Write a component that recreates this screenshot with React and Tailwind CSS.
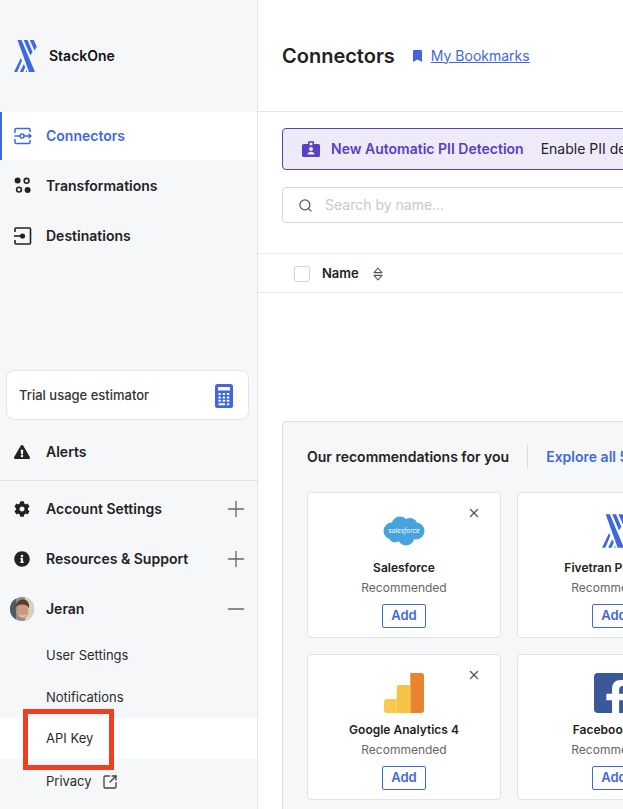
import React from 'react';
import { Search, Plus, Minus, X, SquareArrowOutUpRight } from 'lucide-react';
import { FaExclamationTriangle, FaCog, FaInfoCircle, FaBookmark, FaFacebookF } from 'react-icons/fa';

const BLUE = '#3f68e0';

function Logo({ className }) {
  return (
    <svg viewBox="0 0 23 32" className={className} fill="#3f68e0">
      <polygon points="3.500,0 7.500,0 21,32 15,32" />
      <polygon points="9.800,0 13.500,0 18.500,12 16.300,15.500" />
      <polygon points="15.800,0 19.800,0 22.800,7 20.500,10.500" />
      <polygon points="0,32 3.200,32 8,20.500 6.800,18" />
      <polygon points="5.800,32 9.200,32 11.200,27 9.900,24" />
      <polygon points="11.600,32 13.200,32 12.500,30" />
    </svg>
  );
}

function ConnectorIcon() {
  return (
    <svg viewBox="0 0 18 18" className="h-[18px] w-[18px]" fill="none" stroke={BLUE} strokeWidth="1.5">
      <path d="M1 6V2.500A1 1 0 0 1 2 1.500h13a1 1 0 0 1 1 1V5" />
      <path d="M1 12v3.500a1 1 0 0 0 1 1h13a1 1 0 0 0 1-1V13" />
      <path d="M0.500 9H6M10 9h7M14.500 6.800 17 9l-2.500 2.200" />
      <circle cx="8" cy="9" r="2" />
    </svg>
  );
}

function TransformIcon() {
  return (
    <svg viewBox="0 0 18 18" className="h-[18px] w-[18px]" fill="#222">
      <circle cx="3.600" cy="3.600" r="3" />
      <circle cx="12.600" cy="3.800" r="2.400" fill="none" stroke="#222" strokeWidth="1.600" />
      <circle cx="5" cy="12.600" r="2.400" fill="none" stroke="#222" strokeWidth="1.600" />
      <circle cx="13.600" cy="13" r="3" />
    </svg>
  );
}

function DestinationIcon() {
  return (
    <svg viewBox="0 0 18 18" className="h-[18px] w-[18px]" fill="none" stroke="#222" strokeWidth="1.600">
      <path d="M1 5V2a1 1 0 0 1 1-1h13.500a1 1 0 0 1 1 1v14a1 1 0 0 1-1 1H2a1 1 0 0 1-1-1v-3" />
      <path d="M0 9h7" />
      <circle cx="8.500" cy="9" r="2.600" fill="#222" stroke="none" />
    </svg>
  );
}

function BadgeIcon() {
  return (
    <svg viewBox="0 0 18 16" className="h-4 w-[18px]" fill="#5a3fc0">
      <path d="M1.500 3H6V1.200A1 1 0 0 1 7 .2h4a1 1 0 0 1 1 1V3h4.500A1.500 1.500 0 0 1 18 4.500v10a1.500 1.500 0 0 1-1.500 1.500h-15A1.500 1.500 0 0 1 0 14.500v-10A1.500 1.500 0 0 1 1.500 3Z" />
      <rect x="7.600" y="1.800" width="2.800" height="2.400" rx=".5" fill="#eeeafa" />
      <circle cx="9" cy="8" r="2" fill="#eeeafa" />
      <path d="M5.500 13.500c0-2 1.600-2.800 3.500-2.800s3.500.8 3.500 2.800Z" fill="#eeeafa" />
    </svg>
  );
}

function SortIcon() {
  return (
    <svg viewBox="0 0 10 14" className="h-[14px] w-[10px]" fill="none" stroke="#555" strokeWidth="1.100">
      <path d="M1 5.600 5 1l4 4.600ZM1 8.400 5 13l4-4.600Z" strokeLinejoin="round" />
    </svg>
  );
}

function CalculatorIcon() {
  const dots = [];
  for (let row = 0; row < 3; row++) {
    for (let col = 0; col < 3; col++) {
      dots.push(<rect key={`${row}-${col}`} x={3.500 + col * 4.200} y={9 + row * 3.400} width="2.400" height="2" rx=".5" />);
    }
  }
  return (
    <svg viewBox="0 0 18 24" className="h-6 w-[18px]">
      <rect width="18" height="24" rx="2.500" fill="#3f68e0" />
      <g fill="#fff">
        <rect x="3" y="3" width="12" height="3.500" rx=".5" />
        {dots}
        <rect x="3.500" y="19.200" width="6.600" height="2" rx=".5" />
        <rect x="11.900" y="19.200" width="2.400" height="2" rx=".5" />
      </g>
    </svg>
  );
}

function Avatar() {
  return (
    <svg viewBox="0 0 24 24" className="h-6 w-6 rounded-full">
      <rect width="24" height="24" fill="#8d8f8a" />
      <rect x="15" width="9" height="24" fill="#d7d1bd" />
      <rect width="6" height="24" fill="#4e5a66" />
      <ellipse cx="12.500" cy="14" rx="6" ry="7.500" fill="#c99a7c" />
      <path d="M5.500 10C6 3.500 11 2 14 2.500S20 6 19 11c-2-3-5-4-8-3.500S7 9 5.500 10Z" fill="#5a3d2b" />
      <path d="M9 17.500c2 1.800 5 1.800 7 0-1 3-6 3-7 0Z" fill="#f4ede4" />
    </svg>
  );
}

function Salesforce() {
  return (
    <svg viewBox="0 0 42 30" className="h-[30px] w-[42px]">
      <g fill="#47a2de">
        <circle cx="9" cy="15" r="8.500" />
        <circle cx="17" cy="9" r="8.500" />
        <circle cx="27" cy="9.500" r="7.500" />
        <circle cx="33" cy="15" r="8.500" />
        <circle cx="23" cy="21" r="8.500" />
        <circle cx="12" cy="20" r="6.500" />
      </g>
      <text x="21" y="16.500" textAnchor="middle" fontSize="6.400" fill="#fff" fontStyle="italic" fontFamily="Inter, sans-serif">salesforce</text>
    </svg>
  );
}

function Analytics() {
  return (
    <svg viewBox="0 0 40 40" className="h-10 w-10">
      <path d="M26.300 0H37a3 3 0 0 1 3 3v34a3 3 0 0 1-3 3H26.300Z" fill="#e8832f" />
      <path d="M15.700 12H26.300v28H12.700V15a3 3 0 0 1 3-3Z" fill="#f6c445" />
      <path d="M3 26h9.700v14H3a3 3 0 0 1-3-3V29a3 3 0 0 1 3-3Z" fill="#f7ca4f" />
    </svg>
  );
}

function NavRow({ icon, label, trailing, active }) {
  return (
    <div className={`relative flex items-center pl-[14px] pr-2 ${active ? 'h-[48px] bg-white' : 'h-[50px]'}`}>
      {active && <span className="absolute bottom-0 left-0 top-0 w-[2px] bg-[#3f68e0]" />}
      <span className="flex w-[32px] shrink-0 items-center">{icon}</span>
      <span className={`flex-1 text-sm font-semibold ${active ? 'text-[#3f68e0]' : 'text-[#222]'}`}>{label}</span>
      {trailing}
    </div>
  );
}

function SubRow({ label, icon, active }) {
  return (
    <div className={`flex items-center gap-[10px] pl-[46px] text-[13px] text-[#2b2b2b] ${active ? '-mt-px mb-[2px] h-[41px] bg-white' : 'h-[42px]'}`}>
      {label}
      {icon}
    </div>
  );
}

function Card({ logo, name, close }) {
  return (
    <div className="relative flex h-[146px] w-[194px] shrink-0 flex-col items-center rounded border border-[#e0e2e6] bg-white">
      {close && <X className="absolute right-[19px] top-[13px] h-[14px] w-[14px] text-[#555]" strokeWidth={2.200} />}
      <div className="mt-[18px] flex h-[40px] items-center">{logo}</div>
      <div className="mt-[8px] text-xs font-semibold leading-[18px] text-[#222]">{name}</div>
      <div className="mt-[2px] text-xs leading-[18px] text-[#666]">Recommended</div>
      <div className="mt-[7px] flex h-6 w-11 items-center justify-center rounded-[2px] border border-[#3f68e0] text-[13px] font-semibold text-[#3f68e0]">Add</div>
    </div>
  );
}

export default function App() {
  return (
    <div className="relative flex h-[809px] w-[623px] overflow-hidden bg-white font-['Inter',sans-serif]">
      <aside className="flex h-full w-[258px] shrink-0 flex-col border-r border-[#e4e6ea] bg-[#f6f7f9]">
        <div className="flex h-[112px] items-center gap-3 pb-[1px] pl-[14px]">
          <Logo className="h-8 w-[23px]" />
          <span className="text-sm font-semibold text-[#111]">StackOne</span>
        </div>
        <NavRow active icon={<ConnectorIcon />} label="Connectors" />
        <div className="h-px" />
        <NavRow icon={<TransformIcon />} label="Transformations" />
        <NavRow icon={<DestinationIcon />} label="Destinations" />
        <div className="flex-1" />
        <div className="ml-[6px] mr-2 flex h-[50px] items-center justify-between rounded-lg border border-[#e2e4e8] bg-white pl-3 pr-[15px] pt-[1px] text-[13px] font-medium text-[#333]">
          Trial usage estimator
          <CalculatorIcon />
        </div>
        <div className="mt-[7px] border-b border-[#dfe1e5] pb-[3px]">
          <NavRow icon={<FaExclamationTriangle className="h-4 w-4 text-[#222]" />} label="Alerts" />
        </div>
        <div className="h-[3px]" />
        <NavRow icon={<FaCog className="h-4 w-4 text-[#222]" />} label="Account Settings" trailing={<Plus className="h-[26px] w-[26px] text-[#666]" strokeWidth={1.200} />} />
        <NavRow icon={<FaInfoCircle className="h-4 w-4 text-[#222]" />} label="Resources & Support" trailing={<Plus className="h-[26px] w-[26px] text-[#666]" strokeWidth={1.200} />} />
        <NavRow icon={<span className="-ml-1"><Avatar /></span>} label="Jeran" trailing={<Minus className="h-[26px] w-[26px] text-[#666]" strokeWidth={1.200} />} />
        <div className="h-[1px]" />
        <SubRow label="User Settings" />
        <SubRow label="Notifications" />
        <SubRow label="API Key" active />
        <SubRow label="Privacy" icon={<SquareArrowOutUpRight className="h-4 w-4 text-[#444]" strokeWidth={2} />} />
        <div className="h-[6px]" />
      </aside>

      <main className="min-w-0 flex-1 overflow-hidden">
        <div className="flex h-[112px] w-[900px] items-center border-b border-[#e2e4e8] pl-[24px]">
          <h1 className="text-xl font-semibold text-[#222]">Connectors</h1>
          <FaBookmark className="ml-[18px] h-3 w-[9px] text-[#3f68e0]" />
          <a className="ml-[9px] text-sm text-[#3f68e0] underline">My Bookmarks</a>
        </div>
        <div className="ml-[24px] mt-4 flex h-[42px] w-[800px] items-center rounded border border-[#5a3fb0] bg-[#eeeafa] pl-[19px]">
          <BadgeIcon />
          <span className="ml-[11px] text-sm font-semibold text-[#5a3fc0]">New Automatic PII Detection</span>
          <span className="ml-[17px] text-sm text-[#222]">Enable PII detection for your connectors</span>
        </div>
        <div className="ml-[24px] mt-[17px] flex h-[36px] w-[800px] items-center rounded border border-[#d5d7db] pl-[15px]">
          <Search className="h-[15px] w-[15px] text-[#555]" strokeWidth={2} />
          <span className="ml-[12px] text-sm text-[#c9c9c9]">Search by name...</span>
        </div>
        <div className="mt-[30px] flex h-[40px] w-[900px] items-center border-y border-[#e8e9ec] pl-[36px] pt-[1px]">
          <span className="h-4 w-4 rounded-[3px] border border-[#cfd1d5] bg-white" />
          <span className="ml-[12px] text-[13px] font-semibold text-[#222]">Name</span>
          <span className="ml-[14px] flex"><SortIcon /></span>
        </div>
        <section className="ml-[24px] mt-[128px] h-[400px] w-[800px] rounded-t border border-[#dcdee2] bg-[#f6f7f9] pl-[24px]">
          <div className="flex h-[70px] items-center">
            <span className="text-sm font-semibold text-[#222]">Our recommendations for you</span>
            <span className="mx-[18px] h-6 w-px bg-[#d8dade]" />
            <span className="text-sm font-semibold text-[#3f68e0]">Explore all 500+ connectors</span>
          </div>
          <div className="flex gap-4">
            <Card close logo={<Salesforce />} name="Salesforce" />
            <Card logo={<Logo className="h-[34px] w-[24px]" />} name="Fivetran Platform" />
          </div>
          <div className="mt-4 flex gap-4">
            <Card close logo={<Analytics />} name="Google Analytics 4" />
            <Card logo={<span className="flex h-10 w-10 items-end justify-end overflow-hidden rounded-sm bg-[#3b5998]"><FaFacebookF className="-mb-[3px] h-9 w-9 text-white" /></span>} name="Facebook Ads" />
          </div>
        </section>
      </main>

      {/* annotation drawn over the page */}
      <div className="absolute left-[23px] top-[709px] h-[61px] w-[91px] border-[5px] border-[#ee3f22]" />
    </div>
  );
}
